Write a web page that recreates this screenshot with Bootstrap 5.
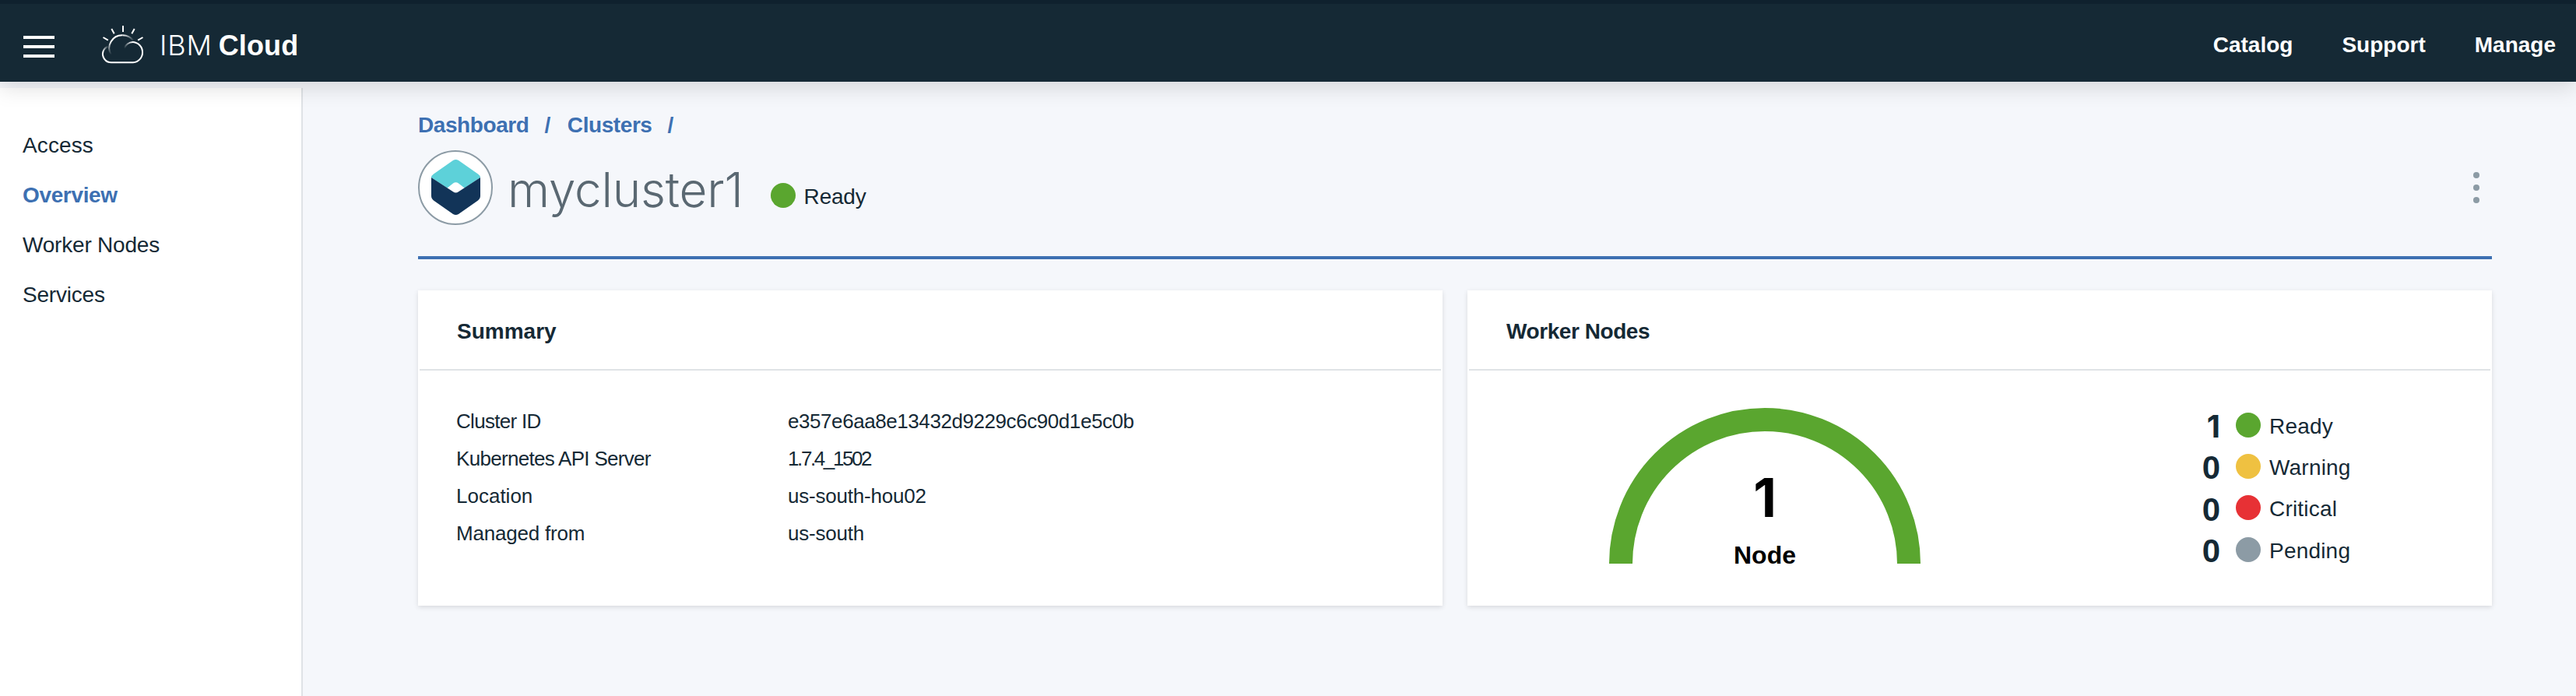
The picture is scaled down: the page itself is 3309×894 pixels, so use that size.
<!DOCTYPE html>
<html lang="en">
<head>
<meta charset="utf-8">
<title>mycluster1 - IBM Cloud</title>
<link rel="stylesheet" href="https://cdn.jsdelivr.net/npm/bootstrap@5.3.0/dist/css/bootstrap.min.css">
<style>
  body { font-family: "Liberation Sans", Arial, sans-serif; font-size: 28px; line-height: 32px; color: #152935; background: #f5f7fb; min-height: 894px; overflow: hidden; }
  a { color: inherit; text-decoration: none; }
  .topbar { height: 105px; padding: 5px 26px 0 30px; background: #152935; border-top: 5px solid #0f212e; box-shadow: 0 8px 26px rgba(0,0,0,.13); z-index: 5; }
  .burger { width: 40px; height: 28px; margin: 5px 58px 0 0; }
  .burger i { height: 4px; background: #fff; }
  .brand { font-size: 36px; margin: 2px 0 0 15px; letter-spacing: .1px; }
  .brand .light-face { letter-spacing: .8px; margin-right: -2px; }
  .light-face { font-family: Inter, "Liberation Sans", sans-serif; font-weight: 300; }
  .topnav { gap: 63px; }
  .side { width: 389px; height: 781px; margin-top: 8px; padding: 42px 0 0 29px; background: #fff; border-right: 2px solid #dfe3e6; }
  .side a { line-height: 64px; letter-spacing: -.2px; }
  .side a:first-child { letter-spacing: .1px; }
  .side a.accent { letter-spacing: -.35px; }
  .accent { color: #3d70b2; }
  main { padding: 40px 108px 0 148px; }
  .crumbs { gap: 20px; line-height: 32px; letter-spacing: -.42px; height: 48px; }
  .crumbs span { padding-right: 2px; }
  .heading { height: 140px; border-bottom: 4px solid #3d70b2; }
  .mark-ring { width: 96px; height: 96px; }
  .cluster-name { font-size: 62px; line-height: 102px; letter-spacing: -.2px; color: #5a6872; margin: 0 0 0 19px; }
  .dot { width: 32px; height: 32px; border-radius: 50%; flex: none; }
  .green { background: #5aa62f; } .yellow { background: #efc141; } .red { background: #e73135; } .gray { background: #8c9ba5; }
  .state { margin: 42px 0 0 35.4px; gap: 10.6px; }
  .state span { padding-top: 2px; }
  .kebab { gap: 8px; margin: 28px 16px 0 0; }
  .kebab i { width: 8px; height: 8px; border-radius: 50%; background: #8c9ba5; }
  .panels { display: grid; grid-template-columns: 1fr 1fr; gap: 32px; margin-top: 40px; }
  .panel { height: 405px; border: 0; border-radius: 0; background: #fff; box-shadow: 0 2px 6px rgba(0,0,0,.12); padding: 0 2px; }
  .panel h2 { font-size: 28px; line-height: 32px; font-weight: 700; margin: 0; height: 103px; padding: 37px 0 0 48px; border-bottom: 2px solid #dfe3e6; }
  .facts { display: grid; grid-template-columns: 426px 1fr; margin: 41px 0 0 47px; font-size: 26px; line-height: 48px; }
  .facts dt { font-weight: 400; } .facts dd { margin: 0; }
  .t1 { letter-spacing: -.2px; } .t2 { letter-spacing: -.43px; } .t3 { letter-spacing: -.7px; } .t4 { letter-spacing: -2.4px; }
  .gauge { width: 400px; height: 200px; margin: 48px 0 0 180px; overflow: visible; }
  .bold-one { font-family: Inter, "Liberation Sans", sans-serif; font-weight: 700; }
  .tally { display: grid; grid-template-columns: 24px 32px 1fr; column-gap: 20px; margin: 43px 0 0 361px; grid-auto-rows: 53.33px; align-items: center; }
  .tally b { font-size: 42px; text-align: right; line-height: 48px; padding-top: 5px; }
  .tally b.bold-one { font-size: 40px; }
  .tally .lbl { margin-left: -9px; padding-top: 4px; line-height: 46px; letter-spacing: .2px; }
</style>
</head>
<body>
<header class="topbar d-flex align-items-center position-relative">
  <div class="burger d-flex flex-column justify-content-between"><i></i><i></i><i></i></div>
  <svg width="62" height="56" viewBox="0 0 62 56" fill="none" stroke="#fff" stroke-width="2">
    <defs>
      <linearGradient id="fadeA" gradientUnits="userSpaceOnUse" x1="14" y1="40" x2="17" y2="24"><stop stop-color="#fff" stop-opacity="0"/><stop offset="1" stop-color="#fff"/></linearGradient>
      <linearGradient id="fadeB" gradientUnits="userSpaceOnUse" x1="29" y1="15" x2="44" y2="22"><stop stop-color="#fff"/><stop offset="1" stop-color="#fff" stop-opacity="0"/></linearGradient>
      <linearGradient id="fadeC" gradientUnits="userSpaceOnUse" x1="31" y1="31" x2="42" y2="24"><stop stop-color="#fff" stop-opacity="0"/><stop offset="1" stop-color="#fff"/></linearGradient>
      <linearGradient id="fadeD" gradientUnits="userSpaceOnUse" x1="4" y1="36" x2="11" y2="29"><stop stop-color="#fff"/><stop offset="1" stop-color="#fff" stop-opacity="0"/></linearGradient>
    </defs>
    <path d="M30 3v8M15.3 7l3.4 6.3M44.7 7l-3.4 6.3M4.5 18l6.3 3.6M55.5 18l-6.3 3.6"/>
    <path stroke="url(#fadeA)" d="M14.6 40A16.5 16.5 0 0 1 29.5 15.2"/>
    <path stroke="url(#fadeB)" d="M29.5 15.2A17 17 0 0 1 43.5 22.5"/>
    <path stroke="url(#fadeC)" d="M31.5 32A13.3 13.3 0 0 1 43 24"/>
    <path d="M43 24A13.2 13.2 0 0 1 43 50.3H15A11 11 0 0 1 4.5 36"/>
    <path stroke="url(#fadeD)" d="M4.5 36Q6.500 31 11 29.500"/>
  </svg>
  <a href="#" class="brand text-white"><span class="light-face">IBM</span> <b>Cloud</b></a>
  <nav class="topnav d-flex ms-auto text-white fw-bold"><a href="#">Catalog</a><a href="#">Support</a><a href="#">Manage</a></nav>
</header>
<div class="d-flex">
  <nav class="side d-flex flex-column flex-shrink-0">
    <a href="#">Access</a><a href="#" class="accent fw-bold">Overview</a><a href="#">Worker Nodes</a><a href="#">Services</a>
  </nav>
  <main class="flex-grow-1">
    <div class="crumbs d-flex accent fw-bold"><a href="#">Dashboard</a><span>/</span><a href="#">Clusters</a><span>/</span></div>
    <div class="heading d-flex align-items-start">
      <svg class="mark-ring" viewBox="0 0 96 96">
        <circle cx="48" cy="48" r="47" fill="#fff" stroke="#8c9ba5" stroke-width="2"/>
        <path fill="#5dd1d9" d="M45 13Q48.500 11 52 13L77 30.500Q80 32.500 80 35L59.700 48.500L52 42.500Q48.500 40 45 42.500L37.500 48.500L17 35Q17 32.500 20 30.500Z"/>
        <path fill="#123458" d="M17 35L45 53.300Q48.500 55.800 52 53.300L80 35V59Q80 62 77 64.500L52 82Q48.500 84 45 82L20 64.500Q17 62 17 59Z"/>
      </svg>
      <h1 class="cluster-name light-face">mycluster1</h1>
      <div class="state d-flex"><i class="dot green"></i><span class="t1">Ready</span></div>
      <div class="kebab d-flex flex-column ms-auto"><i></i><i></i><i></i></div>
    </div>
    <div class="panels">
      <section class="panel card">
        <h2>Summary</h2>
        <dl class="facts">
          <dt class="t3">Cluster ID</dt><dd class="t2">e357e6aa8e13432d9229c6c90d1e5c0b</dd>
          <dt class="t3">Kubernetes API Server</dt><dd class="t4">1.7.4_1502</dd>
          <dt>Location</dt><dd class="t1">us-south-hou02</dd>
          <dt class="t1">Managed from</dt><dd class="t1">us-south</dd>
        </dl>
      </section>
      <section class="panel card">
        <h2 class="t2">Worker Nodes</h2>
        <div class="d-flex align-items-start">
          <svg class="gauge" viewBox="0 0 400 200" font-weight="700" text-anchor="middle">
            <path d="M15 200A185 185 0 0 1 385 200" fill="none" stroke="#5aa62f" stroke-width="30"/>
            <text class="bold-one" x="200" y="140" font-size="69">1</text>
            <text x="200" y="200" font-size="32">Node</text>
          </svg>
          <div class="tally">
            <b class="bold-one">1</b><i class="dot green"></i><span class="lbl">Ready</span>
            <b>0</b><i class="dot yellow"></i><span class="lbl">Warning</span>
            <b>0</b><i class="dot red"></i><span class="lbl">Critical</span>
            <b>0</b><i class="dot gray"></i><span class="lbl">Pending</span>
          </div>
        </div>
      </section>
    </div>
  </main>
</div>
<script src="https://cdn.jsdelivr.net/npm/bootstrap@5.3.0/dist/js/bootstrap.bundle.min.js"></script>
</body>
</html>
